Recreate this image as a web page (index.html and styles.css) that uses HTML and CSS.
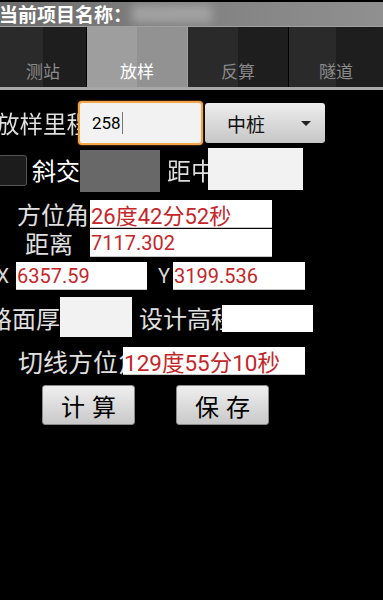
FILE: index.html
```html
<!DOCTYPE html>
<html lang="zh">
<head>
    <meta charset="UTF-8">
    <meta name="viewport" content="width=device-width, initial-scale=1.0">
    <link rel="stylesheet" href="styles.css">
    <title>放样</title>
</head>
<body>
    <div class="titlebar">
        <span class="title">当前项目名称：</span>
        <span class="blur"></span>
    </div>
    <div class="tabs">
        <div class="tab t1">测站</div>
        <div class="tab t2 active">放样</div>
        <div class="tab t3">反算</div>
        <div class="tab t4">隧道</div>
    </div>

    <div class="form">
        <div class="row r1">
            <span class="lbl lbl-mile">放样里程</span>
            <div class="edit focus">258<i class="cursor"></i></div>
            <div class="spinner">中桩<b class="arrow"></b></div>
        </div>
        <div class="row r2">
            <span class="check"></span>
            <span class="lbl lbl-skew">斜交</span>
            <span class="box gray"></span>
            <span class="lbl lbl-off">距中</span>
            <span class="box light offbox"></span>
        </div>
        <div class="row r3">
            <span class="lbl lbl-az">方位角</span>
            <div class="field wide"><span class="val deg">26度42分52秒</span></div>
        </div>
        <div class="row r4">
            <span class="lbl lbl-dist">距离</span>
            <div class="field wide"><span class="val">7117.302</span></div>
        </div>
        <div class="row r5">
            <span class="lbl xy lbl-x">X</span>
            <div class="field fx"><span class="val">6357.59</span></div>
            <span class="lbl xy lbl-y">Y</span>
            <div class="field fy"><span class="val">3199.536</span></div>
        </div>
        <div class="row r6">
            <span class="lbl lbl-road">路面厚</span>
            <span class="box light roadbox"></span>
            <span class="lbl lbl-design">设计高程</span>
            <span class="box white designbox"></span>
        </div>
        <div class="row r7">
            <span class="lbl lbl-tan">切线方位角</span>
            <div class="field tan"><span class="val deg big">129度55分10秒</span></div>
        </div>
        <div class="row buttons">
            <button class="btn calc">计算</button>
            <button class="btn save">保存</button>
        </div>
    </div>
</body>
</html>
```

FILE: styles.css
```css
body {
    margin: 0;
    background-color: #000;
    font-family: "Noto Sans CJK SC", sans-serif;
    overflow: hidden;
}

/* title bar */
.titlebar {
    margin-top: 2px;
    height: 24px;
    display: flex;
    align-items: center;
    background: linear-gradient(to right, #6c6c6c, #7e7e7e 40%, #909090);
    border-bottom: 1px solid #a0a0a0;
    overflow: hidden;
}

.title {
    color: #fff;
    font-size: 19px;
    font-weight: bold;
    line-height: 24px;
    margin-left: -1px;
}

.blur {
    width: 80px;
    height: 18px;
    background-color: #a2a2a2;
    filter: blur(5px);
}

/* tabs */
.tabs {
    display: flex;
    height: 60px;
    border-bottom: 3px solid #a8a8a8;
}

.tab {
    display: flex;
    align-items: flex-end;
    justify-content: center;
    padding-bottom: 4px;
    box-sizing: border-box;
    font-size: 17px;
    color: #8a8a8a;
    background: linear-gradient(to right, #2a2a2a 50%, #1e1e1e 50%);
    border-right: 1px solid #000;
}

.t1 { width: 87px; }
.t2 { width: 101px; }
.t3 { width: 101px; }
.t4 { flex: 1; border-right: none; }

.tab.active {
    color: #fff;
    background: linear-gradient(to right, #9e9e9e 50%, #929292 50%);
    border-right: 1px solid #a0a0a0;
}

/* form */
.form {
    padding-top: 11px;
}

.row {
    display: flex;
    align-items: center;
}

.lbl {
    flex: none;
    color: #e0e0e0;
    font-size: 24px;
    line-height: 28px;
    white-space: nowrap;
}

.r1 { height: 44px; }

.lbl-mile {
    width: 82px;
    margin-left: -4px;
    font-size: 23.5px;
    position: relative;
    z-index: 1;
    background: linear-gradient(to right, #e0e0e0 82px, #9a9a9a 82px);
    -webkit-background-clip: text;
    background-clip: text;
    color: transparent;
}

.edit {
    width: 125px;
    height: 44px;
    box-sizing: border-box;
    border: 2px solid #f3a54a;
    border-radius: 4px;
    background-color: #f2f2f2;
    box-shadow: 0 0 2px #d07020;
    padding-left: 12px;
    display: flex;
    align-items: center;
    font-family: Roboto, sans-serif;
    font-size: 17px;
    color: #000;
}

.cursor {
    width: 1px;
    height: 22px;
    background-color: #777;
    margin-left: 1px;
}

.spinner {
    width: 120px;
    height: 40px;
    margin-left: 2px;
    box-sizing: border-box;
    border-radius: 3px;
    background: linear-gradient(#ededed, #c6c6c6);
    display: flex;
    align-items: center;
    padding-left: 22px;
    font-size: 19px;
    color: #111;
}

.arrow {
    width: 0;
    height: 0;
    margin-left: 36px;
    border-left: 5px solid transparent;
    border-right: 5px solid transparent;
    border-top: 5px solid #222;
}

.r2 {
    height: 44px;
    margin-top: 3px;
}

.check {
    width: 29px;
    height: 31px;
    margin-left: -2px;
    box-sizing: border-box;
    background-color: #1c1c1c;
    border: 1px solid #555;
    border-radius: 3px;
}

.lbl-skew {
    width: 48px;
    margin-left: 5px;
    color: #fff;
}

.box { flex: none; }

.gray {
    width: 80px;
    height: 42px;
    align-self: flex-end;
    background-color: #686868;
}

.lbl-off {
    width: 41px;
    margin-left: 7px;
    position: relative;
    z-index: 1;
    background: linear-gradient(to right, #e0e0e0 41px, #a0a0a0 41px);
    -webkit-background-clip: text;
    background-clip: text;
    color: transparent;
}

.light { background-color: #f2f2f2; }
.white { background-color: #fff; }

.offbox {
    width: 95px;
    height: 42px;
    align-self: flex-start;
}

.field {
    flex: none;
    height: 28px;
    box-sizing: border-box;
    background-color: #fff;
    border-bottom: 1px solid #c8c8c8;
    display: flex;
    align-items: center;
    padding-left: 1px;
    overflow: hidden;
}

.val {
    font-family: Roboto, "Noto Sans CJK SC", sans-serif;
    font-size: 20px;
    color: #c4262a;
    white-space: nowrap;
}

.val.deg { font-size: 22px; }
.val.big { font-size: 22.5px; }

.wide { width: 182px; }

.r3 { margin-top: 8px; }

.lbl-az {
    width: 73px;
    margin-left: 17px;
}

.r4 { margin-top: 1px; }

.lbl-dist {
    width: 65px;
    margin-left: 25px;
}

.r5 { margin-top: 5px; }

.xy {
    font-family: Roboto, sans-serif;
    font-size: 20px;
    color: #d8d8d8;
}

.lbl-x {
    margin-left: -6px;
    text-align: right;
    padding-right: 7px;
    box-sizing: border-box;
    width: 22px;
}

.fx { width: 131px; }

.lbl-y {
    width: 15px;
    margin-left: 11px;
}

.fy { width: 132px; }

.r6 {
    height: 41px;
    margin-top: 7px;
}

.lbl-road {
    width: 72px;
    margin-left: -12px;
}

.roadbox {
    width: 72px;
    height: 40px;
    align-self: flex-start;
}

.lbl-design {
    width: 83px;
    margin-left: 7px;
    overflow: hidden;
}

.designbox {
    width: 91px;
    height: 27px;
    margin-top: 2px;
}

.r7 { margin-top: 9px; }

.lbl-tan {
    width: 105px;
    margin-left: 18px;
    font-size: 25px;
    overflow: hidden;
}

.tan { width: 182px; }

.buttons { margin-top: 10px; }

.btn {
    width: 93px;
    height: 40px;
    box-sizing: border-box;
    border: 1px solid #8a8a8a;
    border-radius: 3px;
    background: linear-gradient(#efefef, #c9c9c9);
    font-family: "Noto Sans CJK SC", sans-serif;
    font-size: 24px;
    letter-spacing: 7px;
    padding: 0 0 0 7px;
    color: #000;
}

.calc { margin-left: 42px; }
.save { margin-left: 41px; }
```
